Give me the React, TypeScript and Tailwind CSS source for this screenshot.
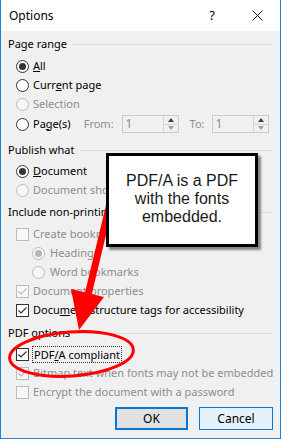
import type { ReactNode } from 'react';

const dis = 'text-[#8d8d8d]';

function Radio({ on, disabled }: { on?: boolean; disabled?: boolean }) {
  return (
    <span
      className={`w-[13px] h-[13px] rounded-full border flex items-center justify-center shrink-0 ${
        disabled ? 'border-[#bcbcbc] bg-[#f7f7f7]' : 'border-[#333] bg-white'
      }`}
    >
      {on && <span className={`w-[7px] h-[7px] rounded-full ${disabled ? 'bg-[#b4b4b4]' : 'bg-[#333]'}`} />}
    </span>
  );
}

function Check({ on, disabled }: { on?: boolean; disabled?: boolean }) {
  return (
    <span
      className={`w-[13px] h-[13px] border shrink-0 flex items-center justify-center ${
        disabled ? 'border-[#bcbcbc] bg-[#f7f7f7]' : 'border-[#333] bg-white'
      }`}
    >
      {on && (
        <svg width="11" height="11" viewBox="0 0 11 11">
          <polyline points="1.5,5.5 4,8 9.5,2.5" fill="none" stroke={disabled ? '#bcbcbc' : '#333'} strokeWidth="1.2" />
        </svg>
      )}
    </span>
  );
}

function Row({ children, indent = 15, className = '' }: { children: ReactNode; indent?: number; className?: string }) {
  return (
    <div className={`h-[19px] flex items-center gap-[4px] whitespace-nowrap ${indent === 15 ? 'pl-[15px]' : 'pl-[31px]'} ${className}`}>
      {children}
    </div>
  );
}

function Header({ label, className = '' }: { label: string; className?: string }) {
  return (
    <div className={`h-[19px] flex items-center pl-[7px] pr-[7px] ${className}`}>
      <span>{label}</span>
      <span className="flex-1 h-px bg-[#dcdcdc] ml-[6px]" />
    </div>
  );
}

function Spin() {
  return (
    <div className="w-[57px] h-[18px] border border-[#cccccc] bg-[#f0f0f0] flex">
      <span className="flex-1 pl-[3px] text-[#8d8d8d] text-[12px] leading-[16px]">1</span>
      <div className="w-[15px] flex flex-col border-l border-[#d6d6d6]">
        <div className="flex-1 flex items-center justify-center border-b border-[#d6d6d6]">
          <span className="w-0 h-0 border-x-[3.5px] border-x-transparent border-b-[4px] border-b-[#404040]" />
        </div>
        <div className="flex-1 flex items-center justify-center">
          <span className="w-0 h-0 border-x-[3.5px] border-x-transparent border-t-[4px] border-t-[#a0a0a0]" />
        </div>
      </div>
    </div>
  );
}

export default function App() {
  return (
    <div className="relative w-[281px] h-[439px] bg-[#f0f0f0] border-x border-b border-[#1883d7] text-[11px] text-black font-['Noto_Sans',sans-serif] overflow-hidden">
      {/* title bar */}
      <div className="h-[31px] bg-white flex items-center pl-[8px] text-[12px]">
        <span className="flex-1">Options</span>
        <span className="text-[13px] mr-[37px]">?</span>
        <svg width="11" height="11" viewBox="0 0 11 11" className="mr-[17px]">
          <path d="M0.5 0.5 L10.5 10.5 M10.5 0.5 L0.5 10.5" stroke="#111" strokeWidth="1" />
        </svg>
      </div>

      <div className="pt-[4px]">
        <Header label="Page range" />
        <Row className="mt-[3px]">
          <Radio on />
          <span><u>A</u>ll</span>
        </Row>
        <Row>
          <Radio />
          <span>Curr<u>e</u>nt page</span>
        </Row>
        <Row>
          <Radio disabled />
          <span className={dis}>Selection</span>
        </Row>
        <div className="h-[20px] flex items-center pl-[15px] whitespace-nowrap">
          <Radio />
          <span className="ml-[4px]">Pa<u>g</u>e(s)</span>
          <span className={`${dis} ml-[13px]`}>From:</span>
          <span className="ml-[8px]"><Spin /></span>
          <span className={`${dis} ml-[11px]`}>To:</span>
          <span className="ml-[7px]"><Spin /></span>
        </div>

        <Header label="Publish what" className="mt-[7px]" />
        <Row className="mt-[2px]">
          <Radio on />
          <span><u>D</u>ocument</span>
        </Row>
        <Row>
          <Radio disabled />
          <span className={dis}>Document showing markup</span>
        </Row>

        <Header label="Include non-printing information" className="mt-[3px]" />
        <Row className="mt-[3px]">
          <Check disabled />
          <span className={dis}>Create bookmarks using:</span>
        </Row>
        <Row indent={31}>
          <Radio on disabled />
          <span className={`${dis} ml-[1px]`}>Headings</span>
        </Row>
        <Row indent={31}>
          <Radio disabled />
          <span className={`${dis} ml-[1px]`}>Word bookmarks</span>
        </Row>
        <Row>
          <Check on disabled />
          <span className={dis}>Document properties</span>
        </Row>
        <Row>
          <Check on />
          <span>Docu<u>m</u>ent structure tags for accessibility</span>
        </Row>

        <Header label="PDF options" className="mt-[4px]" />
        <Row className="mt-[2px]">
          <Check on />
          <span className="outline outline-1 outline-dotted outline-[#333] px-[1px] leading-[15px]">PDF<u>/</u>A compliant</span>
        </Row>
        <Row>
          <Check on disabled />
          <span className={dis}>Bitmap text when fonts may not be embedded</span>
        </Row>
        <Row>
          <Check disabled />
          <span className={dis}>Encrypt the document with a password</span>
        </Row>

        <div className="mt-[5px] flex justify-end gap-[11px] pr-[7px] text-[12px]">
          <button className="w-[73px] h-[23px] border-2 border-[#0078d7] bg-[#e1e1e1] leading-none">OK</button>
          <button className="w-[74px] h-[23px] border border-[#0078d7] bg-[#e5f1fb] leading-none">Cancel</button>
        </div>
      </div>

      {/* annotation: arrow and ellipse */}
      <svg className="absolute left-[-1px] top-0 pointer-events-none" width="281" height="439" viewBox="0 0 281 439">
        <line x1="112" y1="195" x2="88" y2="295" stroke="#f00" strokeWidth="7" />
        <polygon points="79,330 104,297 71,289" fill="#f00" />
        <ellipse cx="71.5" cy="354" rx="62" ry="22" fill="none" stroke="#f00" strokeWidth="3" transform="rotate(-4 71.5 354)" />
      </svg>

      {/* annotation: callout */}
      <div className="absolute left-[105px] top-[153px] w-[152px] h-[94px] border-[3px] border-black bg-white shadow-[3px_3px_2px_rgba(0,0,0,0.45)] pt-[16px] text-center text-[16px] leading-[18px] text-[#1a1a1a] font-['Liberation_Sans',Arial,sans-serif]">
        PDF/A is a PDF
        <br />
        with the fonts
        <br />
        embedded.
      </div>
    </div>
  );
}
